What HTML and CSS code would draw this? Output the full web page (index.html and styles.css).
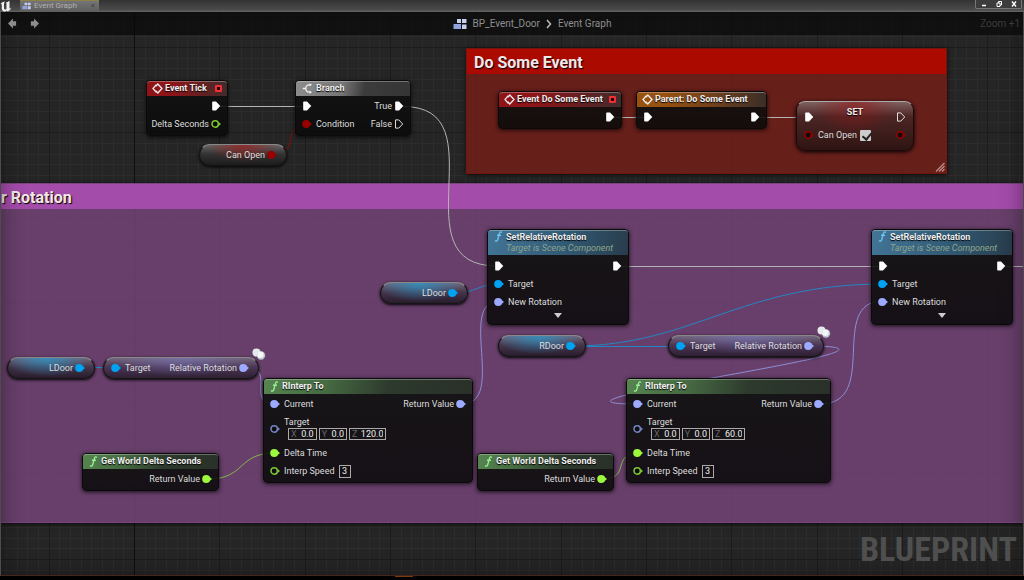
FILE: index.html
```html
<!DOCTYPE html>
<html lang="en">
<head>
    <meta charset="UTF-8">
    <meta name="viewport" content="width=device-width, initial-scale=1.0">
    <title>Event Graph</title>
    <link rel="stylesheet" href="styles.css">
</head>
<body>
    <!-- Shared icons -->
    <svg class="defs" width="0" height="0">
        <symbol id="exec" viewBox="0 0 10 10"><path d="M1.2 1.2Q1.2 .5 2 .5H5L9.3 5 5 9.5H2Q1.2 9.5 1.2 8.8Z" fill="#fff"/></symbol>
        <symbol id="exec-open" viewBox="0 0 10 10"><path d="M1.5 .9H4.8L8.7 5 4.8 9.1H1.5Z" fill="none" stroke="#ddd"/></symbol>
        <symbol id="pin" viewBox="0 0 10 10"><circle cx="4.2" cy="5" r="4" fill="currentColor"/><path d="M7 2.6L10 5 7 7.4Z" fill="currentColor"/></symbol>
        <symbol id="pin-open" viewBox="0 0 10 10"><circle cx="4.2" cy="5" r="3.2" fill="#0c0c0c" stroke="currentColor" stroke-width="1.5"/><path d="M7.6 3L10 5 7.6 7Z" fill="currentColor"/></symbol>
        <symbol id="diamond" viewBox="0 0 11 11"><path d="M4.3 1.6L1 5.5 4.3 9.4M3.8 3.2L5.8 1 10 5.5 5.8 10 3.8 7.8" fill="none" stroke="#eee" stroke-width="1.3"/></symbol>
        <symbol id="func" viewBox="0 0 9 12"><path d="M8.2 1.7C7.2 .4 6 .9 5.5 2.8L3.7 9.3C3.2 11.2 1.9 11.6 .8 10.4M2.8 4.6H7.2" fill="none" stroke="currentColor" stroke-width="1.5"/></symbol>
        <symbol id="fork" viewBox="0 0 11 11"><path d="M8.5 1.8H7Q4 2 3.8 5.5 4 9 7 9.2H8.5M.8 5.5H3.8" fill="none" stroke="#eee" stroke-width="1.3"/><path d="M7.5 .2L10 1.8 7.5 3.4ZM7.5 7.6L10 9.2 7.5 10.8Z" fill="#eee"/></symbol>
        <symbol id="graph" viewBox="0 0 14 12"><path d="M4 1H8V5H4ZM9 1H13.500V5H9ZM9 6.500H13.500V11H9Z" fill="#c6d0ee"/><path d="M.5 6H8V11H.5Z" fill="#8fa3e0"/></symbol>
        <symbol id="bubbles" viewBox="0 0 14 12"><circle cx="4.500" cy="4.500" r="4" fill="#e6eaec"/><circle cx="9" cy="7.500" r="4.200" fill="#b8c4cc"/><circle cx="8.500" cy="6.800" r="3.200" fill="#f4f6f7"/></symbol>
    </svg>

    <header class="titlebar">
        <svg class="logo" viewBox="0 0 12 12"><path d="M.5 4Q2 1.500 5 1.500 4 2.500 4 4V8.500Q4 9.500 5 9.500 6 9.500 6.500 9V4Q6.500 3 5.800 2.800 7.500 2.500 9.500 .8V8Q9.500 9 11.300 8.200 9.500 11 7.800 11.500L6.800 10.600Q5.500 12 3.500 11.300 1.800 10.500 1.800 8.500V5Q1.800 3.500 .5 4Z" fill="#f2f2f2"/></svg>
        <button class="tab"><svg class="tab-icon"><use href="#graph"/></svg><span>Event Graph</span><span class="tab-close">×</span></button>
        <div class="window-buttons">
            <button aria-label="Minimize"><svg viewBox="0 0 12 8"><path d="M4 5.500H8" stroke="#fff" stroke-width="1.500"/></svg></button>
            <button aria-label="Restore"><svg viewBox="0 0 12 8"><path d="M4 3H7V6.500H4ZM5.500 3V1.500H8.500V5H7" fill="none" stroke="#fff"/></svg></button>
            <button aria-label="Close"><svg viewBox="0 0 12 8"><path d="M4 1.500L8 6.500M8 1.500L4 6.500" stroke="#fff" stroke-width="1.400"/></svg></button>
        </div>
    </header>

    <main class="graph">
        <svg class="grid">
            <defs>
                <pattern id="minor" x="133" y="35" width="256" height="256" patternUnits="userSpaceOnUse">
                    <path d="M11.500 0V256M21.500 0V256M32.500 0V256M43.500 0V256M53.500 0V256M64.500 0V256M75.500 0V256M96.500 0V256M107.500 0V256M117.500 0V256M128.500 0V256M139.500 0V256M149.500 0V256M160.500 0V256M181.500 0V256M192.500 0V256M203.500 0V256M213.500 0V256M224.500 0V256M235.500 0V256M245.500 0V256M0 11.500H256M0 21.500H256M0 32.500H256M0 43.500H256M0 53.500H256M0 64.500H256M0 75.500H256M0 96.500H256M0 107.500H256M0 117.500H256M0 128.500H256M0 139.500H256M0 149.500H256M0 160.500H256M0 181.500H256M0 192.500H256M0 203.500H256M0 213.500H256M0 224.500H256M0 235.500H256M0 245.500H256" stroke="#2c2c2c"/>
                    <path d="M.5 0V256M85.500 0V256M171.500 0V256M0 .5H256M0 85.500H256M0 170.500H256" stroke="#1c1c1c"/>
                </pattern>
            </defs>
            <rect width="100%" height="100%" fill="url(#minor)"/>
            <path d="M133.500 0V600" stroke="#0e0e0e"/>
        </svg>

        <section class="comment comment-red">
            <h2>Do Some Event</h2>
            <svg class="grip" viewBox="0 0 10 10"><path d="M1 9.500L9.500 1M4 9.500L9.500 4M7 9.500L9.500 7" stroke="#c08a88" stroke-width="1.300"/></svg>
        </section>
        <section class="comment comment-purple">
            <h2>r Rotation</h2>
        </section>

        <!-- Wires -->
        <svg class="wires">
            <g stroke="#b4b4b4">
                <path d="M219 94.500H304M612 105.500H646M758 105.500H808"/>
                <path d="M402 94.500C500 94.500 395 254 496 254"/>
                <path d="M619 254.500H881M1003 254.500H1100"/>
            </g>
            <path stroke="#8a0d0d" d="M273 142C300 142 279 113 306 113"/>
            <g stroke="#2585c4">
                <path d="M455 281C474 281 478 272 498 272"/>
                <path d="M572 334.500H680"/>
                <path d="M572 334C690 334 740 272 882 272"/>
                <path d="M80 355.500H116"/>
            </g>
            <g stroke="#8f8fd6">
                <path d="M461 392C506 392 456 289 498 289"/>
                <path d="M819 392C880 392 826 289 882 289"/>
                <path d="M812 334C948 336 498 392 636 392"/>
                <path d="M245 356C276 356 244 392 274 392"/>
            </g>
            <g stroke="#86b84a">
                <path d="M207 467C245 467 236 441 274 441"/>
                <path d="M602 467C630 467 610 441 638 441"/>
            </g>
        </svg>

        <!-- Event Tick -->
        <article class="node event event-tick">
            <header><svg class="icon"><use href="#diamond"/></svg><h3>Event Tick</h3><i class="delegate"></i></header>
            <div class="row out"><svg class="pin"><use href="#exec"/></svg></div>
            <div class="row out"><span>Delta Seconds</span><svg class="pin float"><use href="#pin-open"/></svg></div>
        </article>

        <article class="node branch">
            <header><svg class="icon"><use href="#fork"/></svg><h3>Branch</h3></header>
            <div class="row"><svg class="pin"><use href="#exec"/></svg><span class="end">True</span><svg class="pin"><use href="#exec"/></svg></div>
            <div class="row"><svg class="pin bool"><use href="#pin"/></svg><span>Condition</span><span class="end">False</span><svg class="pin"><use href="#exec-open"/></svg></div>
        </article>

        <div class="pill bool-pill can-open"><span class="end">Can Open</span><svg class="pin bool"><use href="#pin"/></svg></div>

        <!-- Do Some Event -->
        <article class="node event event-some">
            <header><svg class="icon"><use href="#diamond"/></svg><h3>Event Do Some Event</h3><i class="delegate"></i></header>
            <div class="row out"><svg class="pin"><use href="#exec"/></svg></div>
        </article>
        <article class="node parent parent-some">
            <header><svg class="icon"><use href="#diamond"/></svg><h3>Parent: Do Some Event</h3></header>
            <div class="row between"><svg class="pin"><use href="#exec"/></svg><svg class="pin"><use href="#exec"/></svg></div>
        </article>
        <article class="set-node">
            <svg class="pin"><use href="#exec"/></svg>
            <h3>SET</h3>
            <svg class="pin"><use href="#exec-open"/></svg>
            <svg class="pin bool"><use href="#pin-open"/></svg>
            <label>Can Open <input type="checkbox" checked></label>
            <svg class="pin bool"><use href="#pin-open"/></svg>
        </article>

        <!-- Door Rotation -->
        <article class="node call set-rotation-left">
            <header><svg class="icon"><use href="#func"/></svg><div><h3>SetRelativeRotation</h3><p>Target is Scene Component</p></div></header>
            <div class="row between"><svg class="pin"><use href="#exec"/></svg><svg class="pin"><use href="#exec"/></svg></div>
            <div class="row"><svg class="pin object"><use href="#pin"/></svg><span>Target</span></div>
            <div class="row"><svg class="pin rotator"><use href="#pin"/></svg><span>New Rotation</span></div>
            <button class="expand" aria-label="Expand"></button>
        </article>
        <article class="node call set-rotation-right">
            <header><svg class="icon"><use href="#func"/></svg><div><h3>SetRelativeRotation</h3><p>Target is Scene Component</p></div></header>
            <div class="row between"><svg class="pin"><use href="#exec"/></svg><svg class="pin"><use href="#exec"/></svg></div>
            <div class="row"><svg class="pin object"><use href="#pin"/></svg><span>Target</span></div>
            <div class="row"><svg class="pin rotator"><use href="#pin"/></svg><span>New Rotation</span></div>
            <button class="expand" aria-label="Expand"></button>
        </article>

        <div class="pill object-pill ldoor-top"><span class="end">LDoor</span><svg class="pin object"><use href="#pin"/></svg></div>
        <div class="pill object-pill rdoor"><span class="end">RDoor</span><svg class="pin object"><use href="#pin"/></svg></div>
        <div class="pill object-pill ldoor-left"><span class="end">LDoor</span><svg class="pin object"><use href="#pin"/></svg></div>

        <div class="pill rotator-pill rotation-left"><svg class="pin object"><use href="#pin"/></svg><span>Target</span><span class="end">Relative Rotation</span><svg class="pin rotator"><use href="#pin"/></svg><svg class="bubbles"><use href="#bubbles"/></svg></div>
        <div class="pill rotator-pill rotation-right"><svg class="pin object"><use href="#pin"/></svg><span>Target</span><span class="end">Relative Rotation</span><svg class="pin rotator"><use href="#pin"/></svg><svg class="bubbles"><use href="#bubbles"/></svg></div>

        <article class="node pure interp-left">
            <header><svg class="icon"><use href="#func"/></svg><h3>RInterp To</h3></header>
            <div class="row"><svg class="pin rotator"><use href="#pin"/></svg><span>Current</span><span class="end">Return Value</span><svg class="pin rotator"><use href="#pin"/></svg></div>
            <div class="row target-row">
                <svg class="pin rotator-open"><use href="#pin-open"/></svg>
                <div>
                    <span>Target</span>
                    <div class="vector">
                        <label>X <input type="text" value="0.0"></label>
                        <label>Y <input type="text" value="0.0"></label>
                        <label>Z <input class="wide" type="text" value="120.0"></label>
                    </div>
                </div>
            </div>
            <div class="row"><svg class="pin float-full"><use href="#pin"/></svg><span>Delta Time</span></div>
            <div class="row"><svg class="pin float"><use href="#pin-open"/></svg><label for="speed-left">Interp Speed</label><input class="speed" id="speed-left" type="text" value="3"></div>
        </article>
        <article class="node pure interp-right">
            <header><svg class="icon"><use href="#func"/></svg><h3>RInterp To</h3></header>
            <div class="row"><svg class="pin rotator"><use href="#pin"/></svg><span>Current</span><span class="end">Return Value</span><svg class="pin rotator"><use href="#pin"/></svg></div>
            <div class="row target-row">
                <svg class="pin rotator-open"><use href="#pin-open"/></svg>
                <div>
                    <span>Target</span>
                    <div class="vector">
                        <label>X <input type="text" value="0.0"></label>
                        <label>Y <input type="text" value="0.0"></label>
                        <label>Z <input class="mid" type="text" value="60.0"></label>
                    </div>
                </div>
            </div>
            <div class="row"><svg class="pin float-full"><use href="#pin"/></svg><span>Delta Time</span></div>
            <div class="row"><svg class="pin float"><use href="#pin-open"/></svg><label for="speed-right">Interp Speed</label><input class="speed" id="speed-right" type="text" value="3"></div>
        </article>

        <article class="node pure delta-left">
            <header><svg class="icon"><use href="#func"/></svg><h3>Get World Delta Seconds</h3></header>
            <div class="row out"><span>Return Value</span><svg class="pin float-full"><use href="#pin"/></svg></div>
        </article>
        <article class="node pure delta-right">
            <header><svg class="icon"><use href="#func"/></svg><h3>Get World Delta Seconds</h3></header>
            <div class="row out"><span>Return Value</span><svg class="pin float-full"><use href="#pin"/></svg></div>
        </article>

        <div class="vignette"></div>

        <nav class="toolbar">
            <div class="history">
                <button aria-label="Back"><svg viewBox="0 0 10 12"><path d="M0 6L5.500 .5V3.500H9V8.500H5.500V11.500Z" fill="#8c8c8c"/></svg></button>
                <button aria-label="Forward"><svg viewBox="0 0 10 12"><path d="M10 6L4.500 .5V3.500H1V8.500H4.500V11.500Z" fill="#8c8c8c"/></svg></button>
            </div>
            <div class="breadcrumb">
                <svg class="crumb-icon"><use href="#graph"/></svg>
                <a href="#">BP_Event_Door</a>
                <svg class="chevron" viewBox="0 0 6 10"><path d="M1 1L4.500 5 1 9" fill="none" stroke="#bbb" stroke-width="1.500"/></svg>
                <a href="#">Event Graph</a>
            </div>
            <span class="zoom">Zoom +1</span>
        </nav>
        <div class="watermark">BLUEPRINT</div>
    </main>
    <footer class="strip"></footer>
</body>
</html>
```
FILE: styles.css
```css
* {
    box-sizing: border-box;
}

body {
    display: flex;
    flex-direction: column;
    height: 100vh;
    margin: 0;
    overflow: hidden;
    background-color: #000;
    color: #ddd;
    font-family: Roboto, sans-serif;
    font-size: 9px;
    line-height: 12px;
}

h2, h3, p {
    margin: 0;
}

button {
    padding: 0;
    border: none;
    background: none;
    color: inherit;
    font: inherit;
}

a {
    color: #8e8e8e;
    text-decoration: none;
}

.defs {
    position: absolute;
}

/* Window title bar */
.titlebar {
    display: flex;
    flex: none;
    height: 12px;
    background: linear-gradient(#333, #4a4a4a 80%, #666);
}

.logo {
    width: 12px;
    height: 12px;
    margin-right: 8px;
}

.tab {
    display: flex;
    align-items: center;
    gap: 3px;
    width: 79px;
    height: 11px;
    padding: 0 4px 0 2px;
    border-top: 1px solid #8a8248;
    background: linear-gradient(#747474, #606060);
    color: #b0b0b0;
    font-family: "Liberation Sans Narrow", Roboto, sans-serif;
    font-size: 8px;
    line-height: 10px;
}

.tab-icon {
    width: 9px;
    height: 8px;
}

.tab-close {
    margin-left: auto;
    color: #444;
}

.window-buttons {
    display: flex;
    height: 9px;
    margin: 0 2px 0 auto;
    border: 1px solid #777;
    border-top: none;
    border-radius: 0 0 2px 2px;
    background: #3c3c3c;
}

.window-buttons button {
    display: flex;
    width: 15px;
    justify-content: center;
}

.window-buttons svg {
    width: 12px;
    height: 8px;
}

/* Graph canvas */
.graph {
    position: relative;
    flex: 1;
    overflow: hidden;
    border: 1px solid #4c4c4c;
    border-top: none;
    border-bottom-color: #4a241c;
    background-color: #252525;
}

.grid, .wires, .vignette {
    position: absolute;
    top: 0;
    left: 0;
    width: 100%;
    height: 100%;
}

.wires path {
    fill: none;
}

.vignette {
    box-shadow: inset 0 0 22px rgba(0, 0, 0, 0.4);
    pointer-events: none;
}

.toolbar {
    position: absolute;
    top: 0;
    left: 0;
    right: 0;
    display: grid;
    grid-template-columns: 1fr auto 1fr;
    align-items: center;
    height: 23px;
    padding: 0 3px 0 7px;
    background-color: rgba(8, 8, 8, 0.7);
}

.history {
    display: flex;
    gap: 13px;
}

.history svg {
    display: block;
    width: 9px;
    height: 11px;
}

.breadcrumb {
    display: flex;
    align-items: center;
    gap: 6px;
    margin-left: 36px;
    font-size: 10px;
}

.crumb-icon {
    width: 14px;
    height: 12px;
}

.chevron {
    width: 6px;
    height: 10px;
}

.zoom {
    justify-self: end;
    color: #3c3c3c;
    font-size: 10px;
}

.watermark {
    position: absolute;
    right: 6px;
    bottom: 8px;
    color: #4f4f4f;
    font-family: "Liberation Sans Narrow", "Roboto Condensed", Roboto, sans-serif;
    font-size: 34px;
    font-weight: bold;
    line-height: 36px;
}

/* Comment boxes */
.comment {
    position: absolute;
    border: 1px solid;
    box-shadow: 0 1px 4px rgba(0, 0, 0, 0.8);
}

.comment h2 {
    height: 25px;
    padding: 0 7px;
    color: #f0e8e8;
    font-size: 16px;
    line-height: 28px;
    text-shadow: 1px 1px 1px #000;
}

.comment-red {
    top: 36px;
    left: 465px;
    width: 481px;
    height: 126px;
    border-color: #741610;
    background-color: rgba(120, 30, 24, 0.8);
}

.comment-red h2 {
    background-color: #ab0a00;
}

.comment-purple {
    top: 171px;
    left: 0;
    right: 0;
    height: 340px;
    border-width: 1px 0;
    border-color: #7a4480;
    background-color: rgba(122, 71, 126, 0.78);
}

.comment-purple h2 {
    padding: 0;
    background-color: #a34caa;
}

.grip {
    position: absolute;
    right: 1px;
    bottom: 1px;
    width: 10px;
    height: 10px;
}

/* Nodes */
.node {
    position: absolute;
    padding-bottom: 2px;
    border: 1px solid #0a0a0a;
    border-radius: 4px;
    background: linear-gradient(rgba(15, 17, 15, 0.9), rgba(10, 10, 10, 0.88));
    box-shadow: 0 1px 4px rgba(0, 0, 0, 0.8);
    white-space: nowrap;
}

.node > header {
    display: flex;
    align-items: center;
    gap: 2px;
    height: 15px;
    margin-bottom: 1px;
    padding: 0 5px 2px;
    border-top: 1px solid rgba(255, 255, 255, 0.3);
    border-radius: 3px 3px 0 0;
}

h3 {
    color: #eee;
    font-size: 9px;
    line-height: 12px;
    text-shadow: 0 1px 1px #000;
}

.icon {
    width: 11px;
    height: 11px;
}

.event > header {
    background: linear-gradient(90deg, #8e1418 30%, #5e2224 75%, #3f2c2c);
}

.branch > header {
    gap: 3px;
    padding-left: 6px;
    background: linear-gradient(100deg, #8c8c8c, #777 40%, #3c3c3c 60%, #353535);
}

.parent > header {
    background: linear-gradient(90deg, #98510f 20%, #6f401d 60%, #3a2e28);
}

.pure > header {
    background: linear-gradient(100deg, #56844f, #466a42 30%, #2d3a2d 60%, #293029);
    color: #96ee96;
}

.call > header {
    align-items: flex-start;
    height: 25px;
    margin-bottom: 2px;
    background: linear-gradient(100deg, #437596, #315a75 55%, #283c4b);
    color: #6cc4f4;
}

.call > header p {
    color: #8fa58c;
    font-size: 9px;
    font-style: italic;
    line-height: 10px;
}

.delegate {
    width: 7px;
    height: 7px;
    margin-left: auto;
    border: 2px solid #f03030;
    border-radius: 1px;
    background-color: #2a0000;
}

.row {
    display: flex;
    align-items: center;
    gap: 4px;
    height: 18px;
    padding: 0 6px;
}

.row.out {
    justify-content: flex-end;
    gap: 2px;
}

.row.between {
    justify-content: space-between;
}

.end {
    margin-left: auto;
}

.end + .pin {
    margin-left: -2px;
}

.pin {
    flex: none;
    width: 10px;
    height: 10px;
}

.bool { color: #960000; }
.float { color: #7dc832; }
.float-full { color: #9cf83c; }
.object { color: #00a2f2; }
.rotator { color: #9caaff; }
.rotator-open { color: #7484c4; }

.target-row {
    height: 31px;
    line-height: 11px;
}

.vector {
    display: flex;
    gap: 2px;
    padding-left: 4px;
}

.vector label {
    display: flex;
    gap: 2px;
    height: 12px;
    padding: 0 2px;
    border: 1px solid #aaa;
    color: #666;
    line-height: 10px;
}

input[type="text"] {
    width: 15px;
    padding: 0;
    border: none;
    background: none;
    color: #eee;
    font: inherit;
    text-align: right;
}

input.mid {
    width: 20px;
}

input.wide {
    width: 24px;
}

input.speed {
    width: 12px;
    height: 13px;
    border: 1px solid #aaa;
    text-align: center;
}

.expand {
    display: block;
    margin: 2px auto 4px;
    border: 4px solid transparent;
    border-top: 5px solid #ccc;
    border-bottom: none;
}

/* Variable pills */
.pill {
    position: absolute;
    display: flex;
    align-items: center;
    gap: 4px;
    width: 88px;
    height: 22px;
    padding: 0 9px 0 7px;
    border: 1px solid #151515;
    border-top-color: #888;
    border-radius: 11px;
    box-shadow: 0 1px 3px #000;
}

.bool-pill {
    background: radial-gradient(ellipse at 50% 0, rgba(150, 30, 30, 0.8), transparent 60%), linear-gradient(#666, #333 45%, #1c1c1c);
}

.object-pill {
    background: radial-gradient(ellipse at 45% 0, rgba(40, 150, 200, 0.8), transparent 65%), linear-gradient(#75667a, #46364c 45%, #281c2c);
}

.rotator-pill {
    width: 156px;
    background: radial-gradient(ellipse at 50% 0, rgba(120, 120, 190, 0.6), transparent 65%), linear-gradient(#75667a, #4c3655 45%, #2e2034);
}

.bubbles {
    position: absolute;
    top: -10px;
    right: -8px;
    width: 14px;
    height: 12px;
}

.set-node {
    position: absolute;
    top: 89px;
    left: 795px;
    display: grid;
    grid-template-columns: auto 1fr auto;
    grid-template-rows: 12px 18px;
    row-gap: 8px;
    column-gap: 4px;
    align-items: end;
    width: 118px;
    height: 50px;
    padding: 4px 7px;
    border: 1px solid #1c0a0a;
    border-top-color: #aaa;
    border-radius: 9px;
    background: radial-gradient(ellipse at 50% 0, rgba(150, 20, 20, 0.6), transparent 50%), linear-gradient(#806060, #4c2624 30%, #2e1413);
    box-shadow: 0 1px 4px #000;
}

.set-node h3 {
    align-self: start;
    text-align: center;
}

.set-node > .pin {
    align-self: end;
    margin-bottom: -4px;
}

.set-node > .pin.bool {
    align-self: center;
    margin: 0;
}

.set-node label {
    display: flex;
    align-items: center;
    align-self: center;
    gap: 3px;
}

.set-node input {
    appearance: none;
    width: 11px;
    height: 11px;
    margin: 0;
    border-radius: 1px;
    background: #ccc;
}

.set-node input:checked::after {
    content: "";
    display: block;
    width: 4px;
    height: 7px;
    margin: 1px 4px;
    border: solid #222;
    border-width: 0 2px 2px 0;
    transform: rotate(40deg);
}

/* Places on the canvas */
.event-tick { top: 68px; left: 145px; width: 82px; }
.branch { top: 68px; left: 294px; width: 116px; }
.can-open { top: 132px; left: 198px; }
.event-some { top: 79px; left: 497px; width: 124px; }
.parent-some { top: 79px; left: 635px; width: 131px; }
.set-rotation-left { top: 217px; left: 486px; width: 142px; }
.set-rotation-right { top: 217px; left: 870px; width: 142px; }
.ldoor-top { top: 270px; left: 379px; }
.rdoor { top: 323px; left: 497px; }
.ldoor-left { top: 345px; left: 6px; }
.rotation-left { top: 345px; left: 102px; }
.rotation-right { top: 323px; left: 667px; }
.interp-left { top: 366px; left: 262px; width: 210px; }
.interp-right { top: 366px; left: 625px; width: 205px; }
.delta-left { top: 441px; left: 81px; width: 137px; }
.delta-right { top: 441px; left: 476px; width: 137px; }

.strip {
    flex: none;
    height: 4px;
    background: linear-gradient(90deg, transparent 395px, #7a3a0c 395px, #7a3a0c 413px, transparent 413px) no-repeat 0 0 / 100% 1px;
}
```
